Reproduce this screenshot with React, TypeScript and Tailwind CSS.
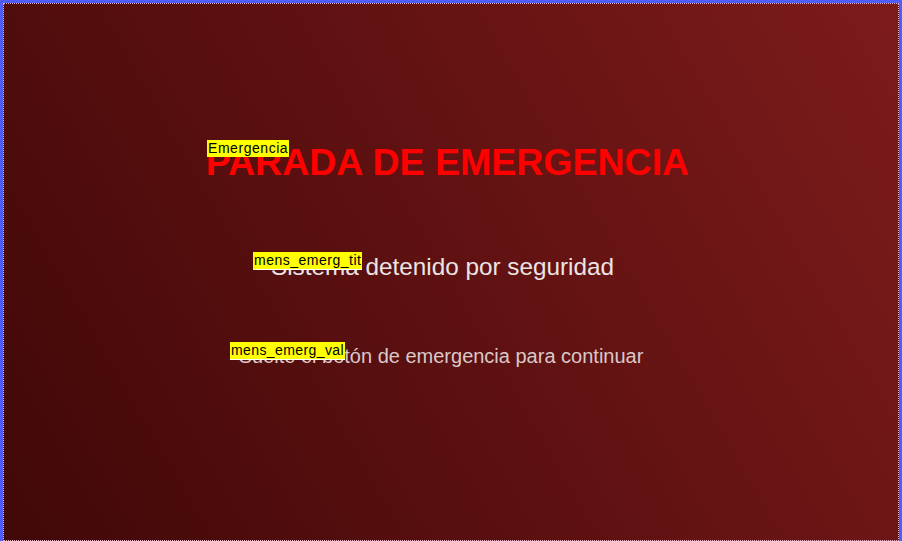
export default function App() {
  return (
    <div className="h-[541px] w-[902px] border-x-[3px] border-t-[3px] border-[#4f5cf5] font-['Liberation_Sans',Arial,sans-serif]">
      <div className="relative flex h-full w-full flex-col items-center border border-dotted border-[#e6b4c8] bg-linear-60 from-[#410808] via-[#5f1111] to-[#7d1b1b]">
        {/* Title */}
        <h1 className="mt-[140px] ml-[-7px] text-[37.5px] leading-[37.5px] font-bold text-[#ff0000]">
          PARADA DE EMERGENCIA
        </h1>
        <p className="mt-[73px] ml-[-17px] text-[24.3px] leading-[24px] text-[#ece4e4]">
          Sistema detenido por seguridad
        </p>
        <p className="mt-[67px] ml-[-20px] text-[20px] leading-[20px] text-[#d9c9c9]">
          Suelte el botón de emergencia para continuar
        </p>

        {/* Tag labels */}
        <span className="absolute left-[203px] top-[136px] h-[17px] bg-[#ffff00] px-px text-[14px] leading-[17px] tracking-[0.55px] text-black">
          Emergencia
        </span>
        <span className="absolute left-[249px] top-[248px] h-[18px] border-b border-white bg-[#ffff00] px-px text-[14px] leading-[17px] tracking-[0.5px] text-black">
          mens_emerg_tit
        </span>
        <span className="absolute left-[226px] top-[338px] h-[18px] border-b border-white bg-[#ffff00] px-px text-[14px] leading-[17px] tracking-[0.4px] text-black">
          mens_emerg_val
        </span>
      </div>
    </div>
  );
}
